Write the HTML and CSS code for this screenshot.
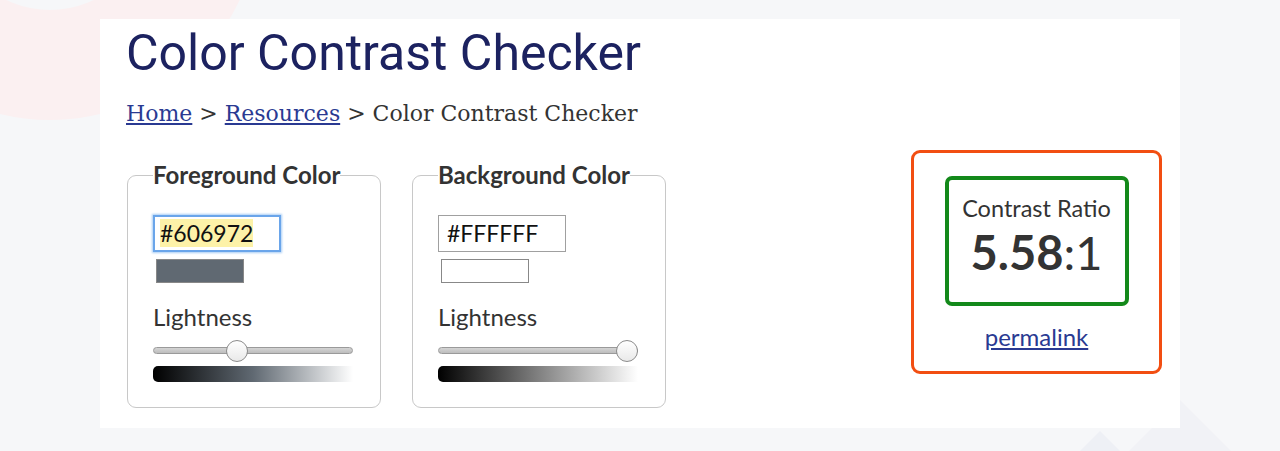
FILE: index.html
```html
<!DOCTYPE html>
<html lang="en">

<head>
    <meta charset="UTF-8">
    <meta name="viewport" content="width=device-width, initial-scale=1.0">
    <title>Color Contrast Checker</title>
    <link rel="stylesheet" href="styles.css">
</head>

<body>
    <!-- faint background decoration -->
    <div class="bg">
        <div class="bg-ring"></div>
        <div class="bg-tri bg-tri-a"></div>
        <div class="bg-tri bg-tri-b"></div>
    </div>

    <div class="page">
        <div class="panel">
            <h1>Color Contrast Checker</h1>
            <p class="breadcrumb">
                <a href="#">Home</a> &gt; <a href="#">Resources</a> &gt; Color Contrast Checker
            </p>

            <div class="checker">
                <!-- Foreground color -->
                <fieldset class="color-set">
                    <legend>Foreground Color</legend>
                    <div class="hex-field focused"><mark>#606972</mark></div>
                    <div class="swatch" style="background-color: #606972;"></div>
                    <div class="label">Lightness</div>
                    <div class="slider">
                        <div class="track"></div>
                        <div class="thumb" style="left: 84px;"></div>
                    </div>
                    <div class="gradient fg-gradient"></div>
                </fieldset>

                <!-- Background color -->
                <fieldset class="color-set">
                    <legend>Background Color</legend>
                    <div class="hex-field">#FFFFFF</div>
                    <div class="swatch" style="background-color: #ffffff;"></div>
                    <div class="label">Lightness</div>
                    <div class="slider">
                        <div class="track"></div>
                        <div class="thumb" style="left: 189px;"></div>
                    </div>
                    <div class="gradient bg-gradient"></div>
                </fieldset>

                <!-- Result -->
                <div class="result">
                    <div class="ratio-box">
                        <div class="ratio-title">Contrast Ratio</div>
                        <div class="ratio-value"><b>5.58</b>:1</div>
                    </div>
                    <a class="permalink" href="#">permalink</a>
                </div>
            </div>
        </div>
    </div>
</body>

</html>
```

FILE: styles.css
```css
html,
body {
    height: 100%;
}

body {
    margin: 0;
    background-color: #f6f7f9;
    font-family: Lato, "Open Sans", sans-serif;
    color: #333;
    overflow: hidden;
}

/* Background decoration */
.bg {
    position: absolute;
    left: 0;
    top: 0;
    right: 0;
    bottom: 0;
    overflow: hidden;
}

.bg-ring {
    position: absolute;
    left: -160px;
    top: -300px;
    width: 420px;
    height: 420px;
    border-radius: 50%;
    border: 110px solid #fbf0f1;
    box-sizing: border-box;
}

.bg-tri {
    position: absolute;
    width: 0;
    height: 0;
    border-left: 120px solid transparent;
    border-right: 120px solid transparent;
    border-bottom: 120px solid #eef0f5;
}

.bg-tri-a {
    left: 980px;
    top: 431px;
}

.bg-tri-b {
    left: 1060px;
    top: 400px;
    border-bottom-color: #f1f2f6;
}

.page {
    position: relative;
    padding: 19px 0 0 100px;
}

.panel {
    width: 1080px;
    height: 409px;
    background-color: #fff;
    padding: 0 18px 0 26px;
    box-sizing: border-box;
}

h1 {
    margin: 0;
    padding-top: 6px;
    font-family: Roboto, sans-serif;
    font-weight: 400;
    font-size: 50px;
    line-height: 56px;
    color: #1c2260;
}

.breadcrumb {
    margin: 19px 0 0;
    font-family: "DejaVu Serif", serif;
    font-size: 22px;
    line-height: 28px;
    color: #333;
}

.breadcrumb a {
    color: #2a3a92;
}

/* Color fieldsets */
.checker {
    display: flex;
    align-items: flex-start;
    gap: 31px;
    margin-top: 9px;
}

.color-set {
    width: 254px;
    height: 246px;
    margin: 25px 0 0 1px;
    padding: 0 25px;
    border: 1px solid #c8c8c8;
    border-radius: 9px;
    box-sizing: border-box;
}

.color-set + .color-set {
    margin-left: 0;
}

legend {
    padding: 0;
    font-size: 24px;
    font-weight: 700;
    line-height: 26px;
    color: #333;
}

.hex-field {
    width: 128px;
    height: 37px;
    margin-top: 27px;
    padding-left: 8px;
    border: 1px solid #a0a0a0;
    box-sizing: border-box;
    font-size: 23px;
    line-height: 35px;
    color: #111;
}

.hex-field.focused {
    border: 2px solid #6aa5ea;
    box-shadow: 0 0 2px 1px #a9cdf5;
    padding-left: 5px;
    line-height: 33px;
}

mark {
    background-color: #fdf2a8;
    color: #111;
}

.swatch {
    width: 88px;
    height: 24px;
    margin: 7px 0 0 3px;
    border: 1px solid #888;
    box-sizing: border-box;
}

.label {
    margin-top: 20px;
    font-size: 24px;
    line-height: 28px;
    color: #333;
}

.slider {
    position: relative;
    width: 200px;
    height: 22px;
    margin-top: 9px;
}

.track {
    position: absolute;
    left: 0;
    right: 0;
    top: 7px;
    height: 7px;
    border: 1px solid #9a9a9a;
    border-radius: 4px;
    background: linear-gradient(#d4d4d4, #bdbdbd);
    box-sizing: border-box;
}

.thumb {
    position: absolute;
    top: 0;
    width: 22px;
    height: 22px;
    margin-left: -11px;
    border: 1px solid #8c8c8c;
    border-radius: 50%;
    background: linear-gradient(#ffffff, #e9e9e9);
    box-sizing: border-box;
}

.gradient {
    width: 200px;
    height: 16px;
    margin-top: 4px;
    border-radius: 5px 0 0 5px;
}

.fg-gradient {
    background: linear-gradient(to right, #000 0%, #606972 50%, #fff 100%);
}

.bg-gradient {
    background: linear-gradient(to right, #000 0%, #808080 50%, #fff 100%);
}

/* Result box */
.result {
    width: 251px;
    height: 224px;
    margin: 13px 0 0 auto;
    border: 3px solid #f24e12;
    border-radius: 9px;
    box-sizing: border-box;
    text-align: center;
}

.ratio-box {
    width: 184px;
    height: 130px;
    margin: 23px auto 0;
    border: 4px solid #13891a;
    border-radius: 7px;
    box-sizing: border-box;
}

.ratio-title {
    margin-top: 15px;
    font-size: 23.5px;
    line-height: 26px;
    color: #333;
}

.ratio-value {
    margin-top: 6px;
    font-size: 47px;
    line-height: 50px;
    color: #333;
}

.ratio-value b {
    font-weight: 700;
}

.permalink {
    display: inline-block;
    margin-top: 18px;
    font-size: 24px;
    line-height: 26px;
    color: #2a3a92;
}
```
